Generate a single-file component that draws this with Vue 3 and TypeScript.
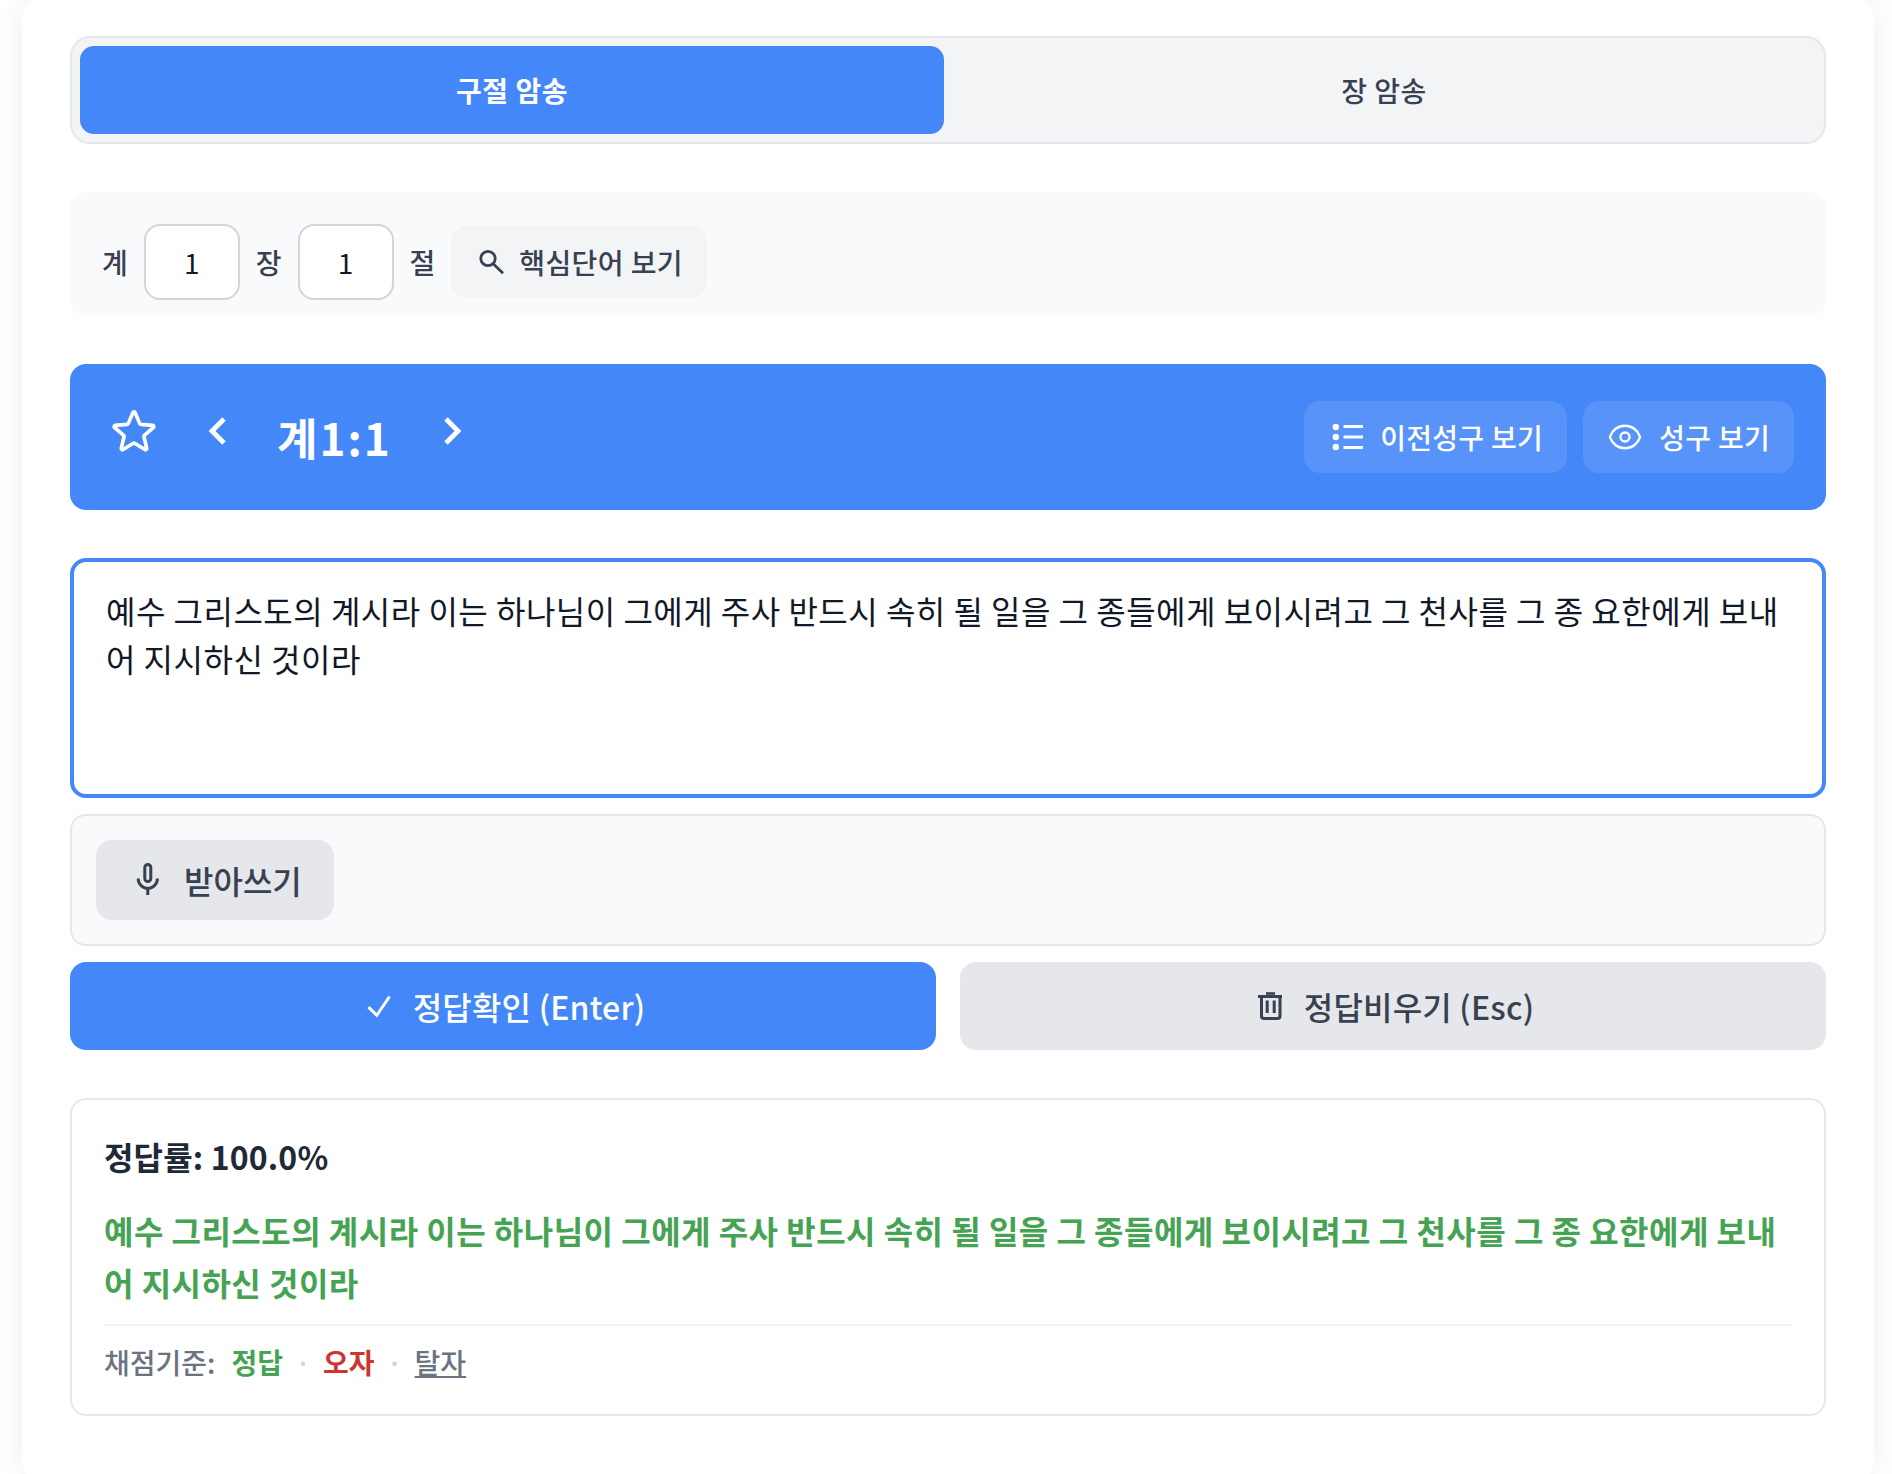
<script setup lang="ts">
import { ref } from 'vue'

const verse = ref('예수 그리스도의 계시라 이는 하나님이 그에게 주사 반드시 속히 될 일을 그 종들에게 보이시려고 그 천사를 그 종 요한에게 보내어 지시하신 것이라')
const chapter = ref(1)
const verseNo = ref(1)
</script>

<template>
  <div class="page">
    <main class="card">
      <div class="tabs">
        <button class="tab active">구절 암송</button>
        <button class="tab">장 암송</button>
      </div>

      <div class="filter">
        <span class="label">계</span>
        <input class="num" :value="chapter" />
        <span class="label">장</span>
        <input class="num" :value="verseNo" />
        <span class="label">절</span>
        <button class="hint">
          <svg class="i32" viewBox="0 0 32 32" fill="none" stroke="currentColor" stroke-width="2.8"><circle cx="13" cy="12.5" r="7.2" /><path d="M18.2 17.7L28 27.2" /></svg>
          핵심단어 보기
        </button>
      </div>

      <header class="head">
        <div class="head-left">
          <button class="icon-btn star">
            <svg class="i52" viewBox="0 0 24 24" fill="none" stroke="currentColor" stroke-width="1.7" stroke-linejoin="round"><path d="M11.48 3.499a.562.562 0 011.04 0l2.125 5.111a.563.563 0 00.475.345l5.518.442c.499.04.701.663.321.988l-4.204 3.602a.563.563 0 00-.182.557l1.285 5.385a.562.562 0 01-.84.61l-4.725-2.885a.562.562 0 00-.586 0L6.982 20.54a.562.562 0 01-.84-.61l1.285-5.386a.562.562 0 00-.182-.557l-4.204-3.602a.563.563 0 01.321-.988l5.518-.442a.563.563 0 00.475-.345L11.48 3.5z" /></svg>
          </button>
          <button class="icon-btn prev">
            <svg class="i48" viewBox="0 0 24 24" fill="none" stroke="currentColor" stroke-width="2.4"><path d="M15 6l-6 6 6 6" /></svg>
          </button>
          <h1 class="title">계1:1</h1>
          <button class="icon-btn next">
            <svg class="i48" viewBox="0 0 24 24" fill="none" stroke="currentColor" stroke-width="2.4"><path d="M9 6l6 6-6 6" /></svg>
          </button>
        </div>
        <div class="head-right">
          <button class="ghost">
            <svg class="i36" viewBox="0 0 36 36" fill="none" stroke="currentColor" stroke-width="3"><path d="M15.5 7.5h19.5M15.5 18h19.5M15.5 28.5h19.5" /><g fill="currentColor" stroke="none"><circle cx="7.8" cy="8" r="3.2" /><circle cx="7.8" cy="18" r="3.2" /><circle cx="7.8" cy="28" r="3.2" /></g></svg>
            이전성구 보기
          </button>
          <button class="ghost">
            <svg class="i36" viewBox="0 0 24 24" fill="none" stroke="currentColor" stroke-width="1.6"><path d="M2.036 12.322a1.012 1.012 0 010-.639C3.423 7.51 7.36 4.5 12 4.5c4.638 0 8.573 3.007 9.963 7.178.07.207.07.431 0 .639C20.577 16.49 16.64 19.5 12 19.5c-4.638 0-8.573-3.007-9.963-7.178z" /><path d="M15 12a3 3 0 11-6 0 3 3 0 016 0z" /></svg>
            성구 보기
          </button>
        </div>
      </header>

      <textarea class="answer" v-model="verse"></textarea>

      <div class="stt">
        <button class="dictate">
          <svg class="i40" viewBox="0 0 40 40" fill="none" stroke="currentColor" stroke-width="3"><rect x="16.8" y="4.5" width="6" height="17" rx="3" /><path d="M10.2 18.5a9.6 10 0 0019.2 0M19.8 28.5V35" /></svg>
          받아쓰기
        </button>
      </div>

      <div class="actions">
        <button class="action primary">
          <svg class="i36" viewBox="0 0 24 24" fill="none" stroke="currentColor" stroke-width="1.9"><path d="M5 12.75l5.5 5.5 8.5-12.5" /></svg>
          정답확인 (Enter)
        </button>
        <button class="action secondary">
          <svg class="i36" viewBox="0 0 36 36" fill="none" stroke="currentColor" stroke-width="3"><path d="M9.5 8v20a2.5 2.5 0 002.5 2.5h13.5a2.5 2.5 0 002.5-2.5V8M6 8.5h24" /><path d="M14 5.5h9" stroke-width="2.6" /><path d="M15.2 12.5v12.5M22.2 12.5v12.5" /></svg>
          정답비우기 (Esc)
        </button>
      </div>

      <section class="result">
        <h2 class="score">정답률: 100.0%</h2>
        <p class="graded">{{ verse }}</p>
        <div class="legend">
          <span class="legend-label">채점기준:</span>
          <span class="ok">정답</span>
          <span class="dot">·</span>
          <span class="wrong">오자</span>
          <span class="dot">·</span>
          <span class="missing">탈자</span>
        </div>
      </section>
    </main>
  </div>
</template>

<style>
html, body { margin: 0; background: #fff; }
</style>

<style scoped>
* { box-sizing: border-box; }
.page {
  padding: 0 18px 0 22px;
  height: 1474px;
  overflow: hidden;
  font-family: "Noto Sans CJK KR", "Noto Sans", sans-serif;
  color: #374151;
}
.card {
  background: #fff;
  border-radius: 24px;
  box-shadow: 0 0 30px rgba(0, 0, 0, 0.07);
  margin-top: -4px;
  padding: 40px 48px 0;
  height: 1488px;
}
button { font-family: inherit; border: 0; cursor: pointer; }
svg { display: block; flex: none; }
.i32 { width: 32px; height: 32px; }
.i36 { width: 36px; height: 36px; }
.i40 { width: 40px; height: 40px; }
.i48 { width: 48px; height: 48px; }
.i52 { width: 52px; height: 52px; }

.tabs {
  display: flex;
  gap: 8px;
  height: 108px;
  padding: 8px;
  background: #f3f4f6;
  border: 2px solid #e5e7eb;
  border-radius: 20px;
}
.tab {
  flex: 1;
  border-radius: 14px;
  background: transparent;
  color: #374151;
  font-size: 28px;
  font-weight: 500;
  letter-spacing: 0.5px;
}
.tab.active { background: #4487f9; color: #fff; font-weight: 700; }

.filter {
  margin-top: 48px;
  height: 124px;
  padding: 32px 32px 16px;
  display: flex;
  align-items: center;
  gap: 16px;
  background: #f9fafb;
  border-radius: 16px;
}
.label { font-size: 28px; font-weight: 500; color: #374151; }
.num {
  width: 96px;
  height: 76px;
  border: 2px solid #d1d5db;
  border-radius: 16px;
  background: #fff;
  text-align: center;
  font-family: inherit;
  font-size: 28px;
  color: #111827;
  outline: none;
}
.hint {
  height: 72px;
  display: flex;
  align-items: center;
  gap: 12px;
  padding: 0 24px;
  border-radius: 16px;
  background: #f3f4f6;
  color: #374151;
  font-size: 28px;
  font-weight: 500;
  letter-spacing: 0.4px;
}

.head {
  margin-top: 48px;
  height: 146px;
  padding: 0 32px;
  display: flex;
  align-items: center;
  justify-content: space-between;
  background: #4487f9;
  border-radius: 16px;
  color: #fff;
}
.head-left { display: flex; align-items: center; }
.icon-btn {
  padding: 6px;
  width: 64px;
  height: 64px;
  display: flex;
  align-items: center;
  justify-content: center;
  background: transparent;
  color: #fff;
  margin-bottom: 12px;
}
.star { margin-right: 20px; }
.title {
  margin: 0 28px 0 27px;
  font-size: 44px;
  font-weight: 700;
  line-height: 60px;
  letter-spacing: 2px;
  white-space: nowrap;
}
.head-right { display: flex; gap: 16px; }
.ghost {
  height: 72px;
  padding: 0 24px;
  display: flex;
  align-items: center;
  gap: 16px;
  background: rgba(255, 255, 255, 0.1);
  border-radius: 16px;
  color: #fff;
  font-size: 28px;
  font-weight: 500;
  letter-spacing: 0.3px;
}

.answer {
  display: block;
  width: 100%;
  height: 240px;
  margin: 48px 0 0;
  padding: 24px 32px;
  border: 4px solid #4487f9;
  border-radius: 16px;
  background: #fff;
  font-family: inherit;
  font-size: 32px;
  line-height: 48px;
  letter-spacing: 0.5px;
  color: #111827;
  resize: none;
  outline: none;
  overflow: hidden;
}

.stt {
  margin-top: 16px;
  height: 132px;
  padding: 24px;
  background: #f9fafb;
  border: 2px solid #e5e7eb;
  border-radius: 16px;
}
.dictate {
  height: 80px;
  display: flex;
  align-items: center;
  gap: 16px;
  padding: 0 32px;
  background: #e5e7eb;
  border-radius: 16px;
  color: #374151;
  font-size: 32px;
  font-weight: 500;
}

.actions {
  margin-top: 16px;
  display: grid;
  grid-template-columns: 1fr 1fr;
  gap: 24px;
}
.action {
  height: 88px;
  display: flex;
  align-items: center;
  justify-content: center;
  gap: 16px;
  border-radius: 16px;
  font-size: 32px;
  font-weight: 500;
  letter-spacing: 0.2px;
}
.primary { background: #4487f9; color: #fff; }
.secondary { background: #e5e7eb; color: #374151; }

.result {
  margin-top: 48px;
  height: 318px;
  padding: 32px 32px 0;
  background: #fff;
  border: 2px solid #e5e7eb;
  border-radius: 16px;
}
.score {
  margin: 0;
  font-size: 32px;
  font-weight: 700;
  line-height: 48px;
  letter-spacing: 0.15px;
  color: #1f2937;
}
.graded {
  margin: 24px 0 0;
  font-size: 32px;
  font-weight: 700;
  line-height: 52px;
  letter-spacing: 0.47px;
  color: #46a354;
}
.legend {
  margin-top: 16px;
  padding-top: 15px;
  border-top: 2px solid #f3f4f6;
  display: flex;
  align-items: center;
  gap: 16px;
  font-size: 28px;
  line-height: 42px;
  font-weight: 500;
  color: #6b7280;
}
.ok { color: #46a354; font-weight: 700; }
.wrong { color: #cc3630; font-weight: 700; }
.missing { color: #6b7280; text-decoration: underline; }
.dot { color: #d1d5db; margin: 0 -4px; }
</style>
